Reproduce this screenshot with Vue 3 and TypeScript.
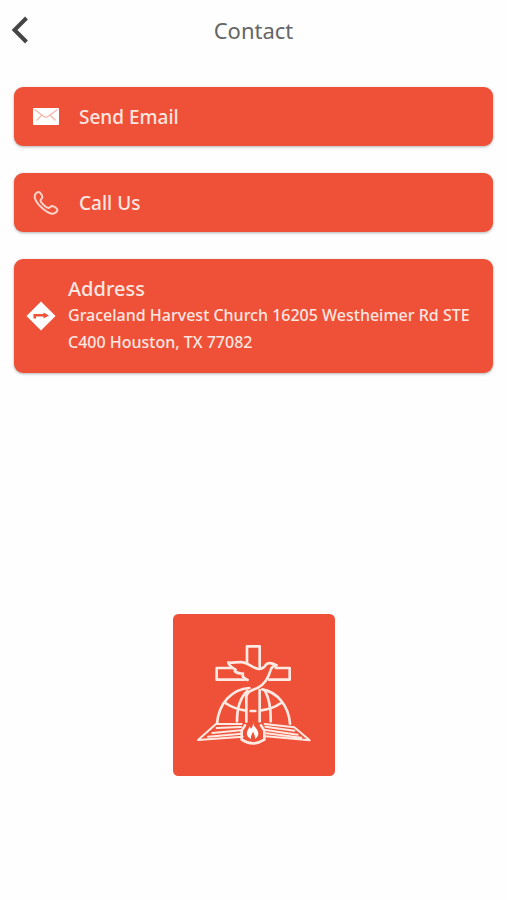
<script setup lang="ts">
interface ContactAction {
  id: 'email' | 'call'
  label: string
  href: string
}

const title = 'Contact'

const actions: ContactAction[] = [
  { id: 'email', label: 'Send Email', href: '#email' },
  { id: 'call', label: 'Call Us', href: '#call' },
]

const address = 'Graceland Harvest Church 16205 Westheimer Rd STE C400 Houston, TX 77082'

function goBack(): void {
  window.history.back()
}
</script>

<template>
  <div class="page">
    <header class="bar">
      <button class="back" type="button" aria-label="Back" @click="goBack">
        <svg width="18" height="28" viewBox="0 0 18 28" aria-hidden="true">
          <path d="M15.5 2 3.5 14l12 12" fill="none" stroke="#454545" stroke-width="4" />
        </svg>
      </button>
      <h1>{{ title }}</h1>
    </header>

    <main class="content">
      <a v-for="action in actions" :key="action.id" class="card action" :href="action.href">
        <svg v-if="action.id === 'email'" width="26" height="26" viewBox="0 0 26 26" aria-hidden="true">
          <rect y="4" width="26" height="17" rx="1" fill="#fff" />
          <path d="m1.5 5.5 9.5 7q2 1.5 4 0l9.5-7M8.5 11.5l-5 5M17.5 11.5l5 5" fill="none" stroke="#f6b3a6" stroke-width="1.2" />
        </svg>
        <svg v-else width="26" height="26" viewBox="0 0 26 26" aria-hidden="true">
          <path
            d="M2.3 4.2C3.2 2.6 5.2 1.3 6.5 2.2c1.3 1.1 2.7 3.2 2.9 4.7.1 1.6-2 2.2-1.9 3.7.2 2.2 5.6 7.3 7.9 7.4 1.5 0 2.2-2.1 3.8-2 1.6.2 4.1 1.8 5 3.2.8 1.5-.9 3.2-2.5 4-2.7 1.3-6.7-.5-10.2-3.2C7.3 16.7 3.4 12.6 2.1 8.7 1.6 7 1.500 5.6 2.3 4.2Z"
            fill="none"
            stroke="#ffd3c9"
            stroke-width="2"
            stroke-linejoin="round"
          />
        </svg>
        <span>{{ action.label }}</span>
      </a>

      <a class="card place" href="#directions">
        <svg width="30" height="30" viewBox="0 0 30 30" aria-hidden="true">
          <path d="m15 .5 14.5 14.5L15 29.5.5 15Z" fill="#fff" />
          <path d="M7.5 17.5v-4.500h10v-1.500l5.500 3-5.500 3v-2H10v2Z" fill="#ee5138" />
        </svg>
        <span class="details">
          <strong>Address</strong>
          <span class="street">{{ address }}</span>
        </span>
      </a>

      <svg class="logo" viewBox="24 28 486 486" role="img" aria-label="Graceland Harvest Church">
        <rect x="24" y="28" width="486" height="486" rx="16" fill="#ee5138" />
        <g fill="none" stroke="#ffe9e3" stroke-width="8" stroke-linejoin="round" stroke-linecap="round">
          <path d="M246 174v-49h38v65M200 190h-45v35h85M332 190h42v35h-62" />
          <path
            d="M190 174c16 1 30-3 45-1 18 3 27 18 45 20 12 1 18-6 23-13 8-9 20-4 32 2-11 1-16 6-18 14-7 25-17 42-38 53-12 6-24 7-31 17l-4 8v77"
          />
          <path d="M190 174c3 10 12 16 22 21-4 2-4 4 0 7 8 5 15 4 22 5-5 7 4 14 14 19" />
          <path d="M156 357c5-60 44-104 97-107M292 254c46 8 79 51 83 103" />
          <path d="M216 350c0-37 6-68 31-91M300 258c13 25 18 54 17 92" />
          <path d="M181 295c18 12 36 19 58 22M257 319h14M289 317c22-3 41-9 59-22" />
          <path d="M284 256v94" />
          <path d="M230 358h-77L99 406l134-10M228 367l-73 3M228 377l-86 8M230 387l-101 9" stroke-width="6" />
          <path d="M299 358l89 10 46 39-132-12M301 366l87 12M302 376l96 14M304 386l105 13" stroke-width="6" />
          <path d="M240 362l-10 16v27q34 22 68 0v-27l-10-16" />
        </g>
        <path
          d="M264 351c0 16 17 22 16 38-1 7-5 11-10 14 2-11-5-15-6-24-2 10-8 14-6 24-8-4-14-10-12-20 2-9 7-11 7-18l5 7c6-6 6-12 6-21Z"
          fill="#fff"
        />
      </svg>
    </main>
  </div>
</template>

<style>
body {
  margin: 0;
  background: #fefefe;
}
</style>

<style scoped>
.page {
  min-height: 100vh;
  font-family: "Noto Sans", "Open Sans", sans-serif;
}

.bar {
  display: grid;
  grid-template-columns: 40px 1fr 40px;
  align-items: center;
  height: 60px;
}

.back {
  display: flex;
  justify-content: center;
  padding: 0;
  border: 0;
  background: none;
  cursor: pointer;
}

h1 {
  margin: 0;
  font-size: 22px;
  line-height: 30px;
  font-weight: 400;
  text-align: center;
  color: #666;
}

.content {
  display: flex;
  flex-direction: column;
  gap: 27px;
  padding: 27px 14px 0;
}

.card {
  display: flex;
  align-items: center;
  border-radius: 9px;
  background: #ee5138;
  box-shadow: 0 1px 3px rgba(0, 0, 0, 0.3);
  color: #ffe6e0;
  text-decoration: none;
}

.card svg {
  flex: none;
}

.action {
  gap: 20px;
  min-height: 59px;
  padding: 0 19px;
  font-size: 19px;
  font-weight: 500;
}

.place {
  gap: 12px;
  padding: 16px 12px 17px;
}

.details {
  display: flex;
  flex-direction: column;
}

.details strong {
  font-size: 20px;
  line-height: 27px;
  font-weight: 500;
}

.street {
  font-size: 16px;
  line-height: 27px;
  font-weight: 500;
}

.logo {
  align-self: center;
  width: 162px;
  height: 162px;
  margin-top: 214px;
}
</style>
